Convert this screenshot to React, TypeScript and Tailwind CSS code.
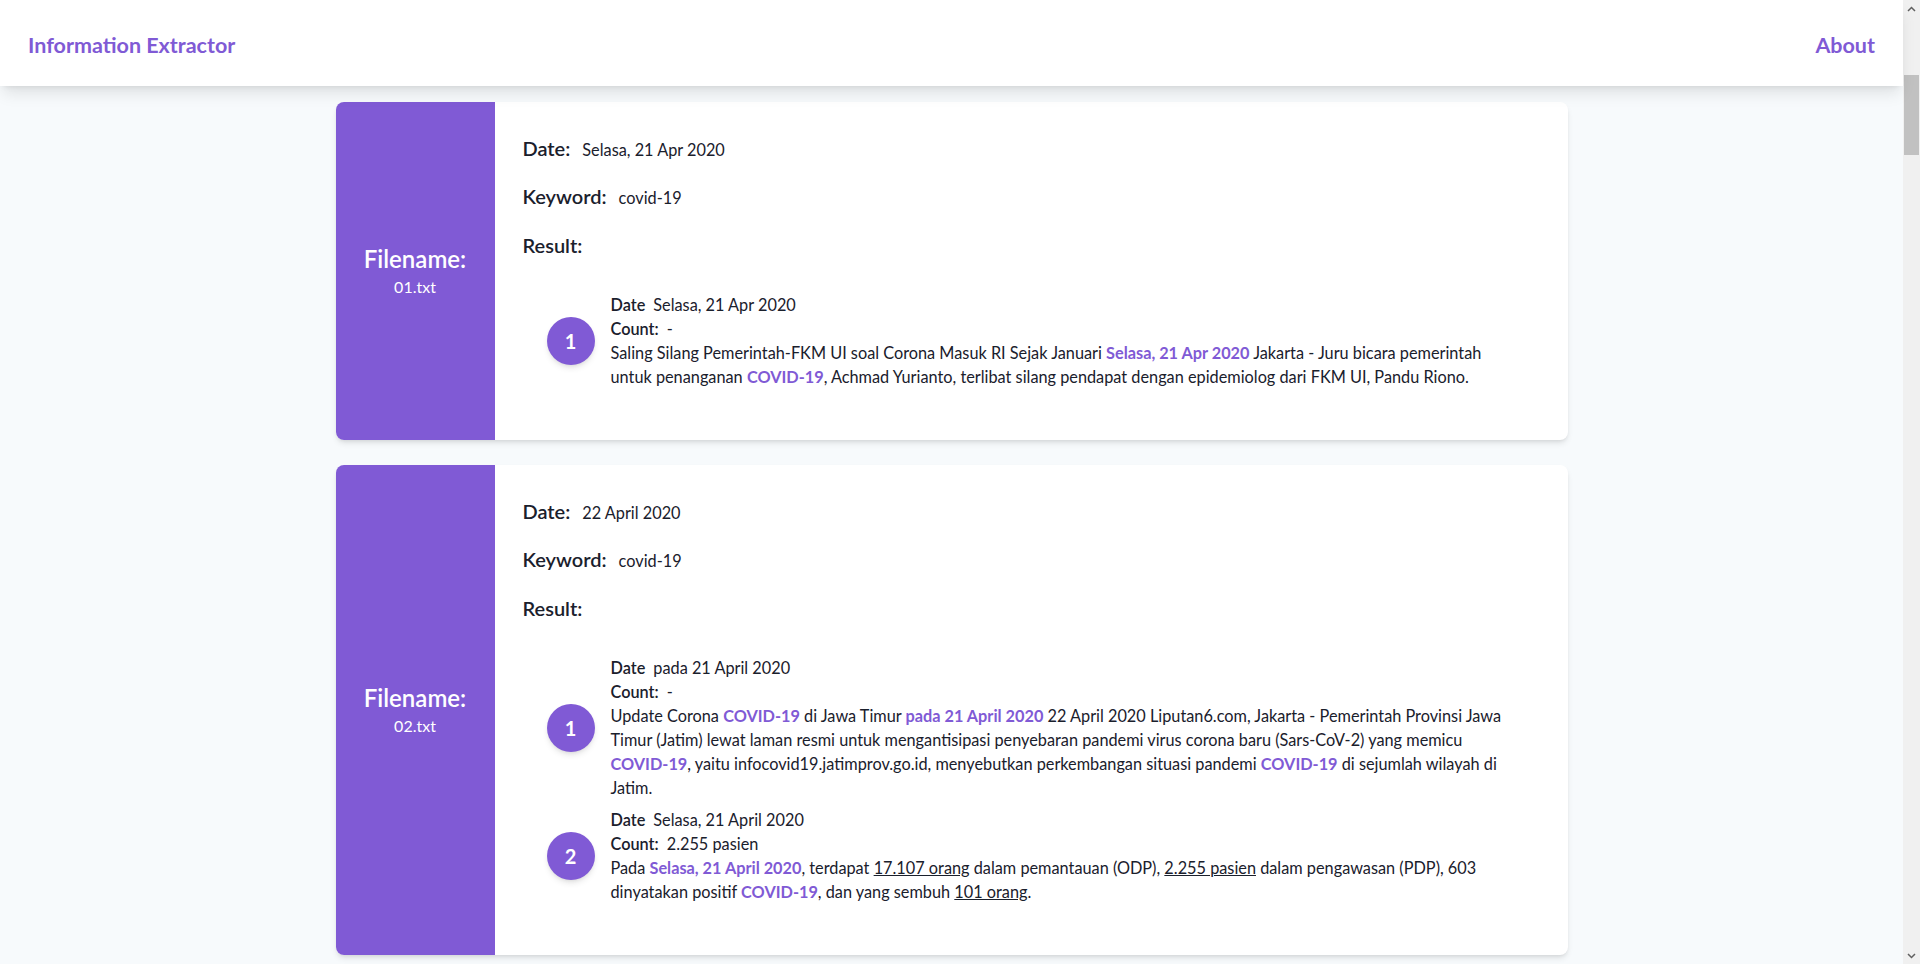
import React from 'react';

type Seg = { t: string; k?: 'hl' | 'u' };

type Item = {
  date: string;
  count: string;
  text: Seg[];
};

type FileResult = {
  filename: string;
  date: string;
  keyword: string;
  items: Item[];
};

const results: FileResult[] = [
  {
    filename: '01.txt',
    date: 'Selasa, 21 Apr 2020',
    keyword: 'covid-19',
    items: [
      {
        date: 'Selasa, 21 Apr 2020',
        count: '-',
        text: [
          { t: 'Saling Silang Pemerintah-FKM UI soal Corona Masuk RI Sejak Januari ' },
          { t: 'Selasa, 21 Apr 2020', k: 'hl' },
          { t: ' Jakarta - Juru bicara pemerintah untuk penanganan ' },
          { t: 'COVID-19', k: 'hl' },
          { t: ', Achmad Yurianto, terlibat silang pendapat dengan epidemiolog dari FKM UI, Pandu Riono.' },
        ],
      },
    ],
  },
  {
    filename: '02.txt',
    date: '22 April 2020',
    keyword: 'covid-19',
    items: [
      {
        date: 'pada 21 April 2020',
        count: '-',
        text: [
          { t: 'Update Corona ' },
          { t: 'COVID-19', k: 'hl' },
          { t: ' di Jawa Timur ' },
          { t: 'pada 21 April 2020', k: 'hl' },
          { t: ' 22 April 2020 Liputan6.com, Jakarta - Pemerintah Provinsi Jawa Timur (Jatim) lewat laman resmi untuk mengantisipasi penyebaran pandemi virus corona baru (Sars-CoV-2) yang memicu ' },
          { t: 'COVID-19', k: 'hl' },
          { t: ', yaitu infocovid19.jatimprov.go.id, menyebutkan perkembangan situasi pandemi ' },
          { t: 'COVID-19', k: 'hl' },
          { t: ' di sejumlah wilayah di Jatim.' },
        ],
      },
      {
        date: 'Selasa, 21 April 2020',
        count: '2.255 pasien',
        text: [
          { t: 'Pada ' },
          { t: 'Selasa, 21 April 2020', k: 'hl' },
          { t: ', terdapat ' },
          { t: '17.107 orang', k: 'u' },
          { t: ' dalam pemantauan (ODP), ' },
          { t: '2.255 pasien', k: 'u' },
          { t: ' dalam pengawasan (PDP), 603 dinyatakan positif ' },
          { t: 'COVID-19', k: 'hl' },
          { t: ', dan yang sembuh ' },
          { t: '101 orang', k: 'u' },
          { t: '.' },
        ],
      },
    ],
  },
];

// baris hasil ekstraksi
const ResultItem = ({ no, item }: { no: number; item: Item }) => (
  <div className="flex items-center">
    <div className="w-12 h-12 shrink-0 rounded-full bg-[#805AD5] text-white text-xl font-bold flex items-center justify-center shadow-md">
      {no}
    </div>
    <div className="ml-4 pr-1 text-[16.3px] leading-6 text-[#1A202C]">
      <div>
        <span className="font-semibold">Date</span>
        <span className="ml-2">{item.date}</span>
      </div>
      <div>
        <span className="font-semibold">Count:</span>
        <span className="ml-2">{item.count}</span>
      </div>
      <p>
        {item.text.map((s, i) =>
          s.k === 'hl' ? (
            <span key={i} className="font-bold text-[#805AD5] whitespace-nowrap">{s.t}</span>
          ) : s.k === 'u' ? (
            <span key={i} className="underline">{s.t}</span>
          ) : (
            <span key={i}>{s.t}</span>
          )
        )}
      </p>
    </div>
  </div>
);

const ResultCard = ({ data }: { data: FileResult }) => (
  <div className="flex bg-white rounded-lg shadow-md overflow-hidden">
    <div className="w-[159px] shrink-0 bg-[#805AD5] text-white flex flex-col items-center justify-center">
      <h2 className="text-2xl font-semibold leading-8">Filename:</h2>
      <span className="text-base leading-6">{data.filename}</span>
    </div>
    <div className="flex-1 pl-7 pr-7 pt-[32px] pb-[51px] text-[#1A202C]">
      <div className="flex items-baseline leading-7">
        <h3 className="text-xl font-semibold">Date:</h3>
        <span className="ml-3 text-[16.3px]">{data.date}</span>
      </div>
      <div className="flex items-baseline leading-7 mt-[18px]">
        <h3 className="text-xl font-semibold">Keyword:</h3>
        <span className="ml-3 text-[16.3px]">{data.keyword}</span>
      </div>
      <h3 className="text-xl font-semibold leading-7 mt-[19px]">Result:</h3>
      <div className="mt-[34px] px-6 flex flex-col gap-2">
        {data.items.map((it, i) => (
          <ResultItem key={i} no={i + 1} item={it} />
        ))}
      </div>
    </div>
  </div>
);

export default function App() {
  return (
    <div className="h-screen flex overflow-hidden bg-[#F7FAFC] font-['Segoe_UI',Lato,sans-serif]">
      <div className="flex-1 flex flex-col min-w-0">
        <header className="h-[86px] shrink-0 bg-white shadow-lg flex items-center justify-between px-7 pt-1 relative z-10">
          <span className="text-[21.5px] font-bold text-[#805AD5]">Information Extractor</span>
          <span className="text-[21.5px] font-bold text-[#805AD5]">About</span>
        </header>
        <main className="flex-1 pt-4">
          <div className="w-[1232px] mx-auto flex flex-col gap-[25px]">
            {results.map((r) => (
              <ResultCard key={r.filename} data={r} />
            ))}
          </div>
        </main>
      </div>
      {/* scrollbar */}
      <div className="w-[17px] shrink-0 bg-[#f0f0f0] flex flex-col items-center">
        <div className="h-[17px] flex items-center justify-center">
          <svg width="9" height="6" viewBox="0 0 9 6"><path d="M1 5 L4.5 1.5 L8 5" stroke="#606060" strokeWidth="1.5" fill="none" /></svg>
        </div>
        <div className="mt-[58px] w-[15px] h-[80px] bg-[#c1c1c1]" />
        <div className="flex-1" />
        <div className="h-[17px] flex items-center justify-center">
          <svg width="9" height="6" viewBox="0 0 9 6"><path d="M1 1 L4.5 4.5 L8 1" stroke="#606060" strokeWidth="1.5" fill="none" /></svg>
        </div>
      </div>
    </div>
  );
}
